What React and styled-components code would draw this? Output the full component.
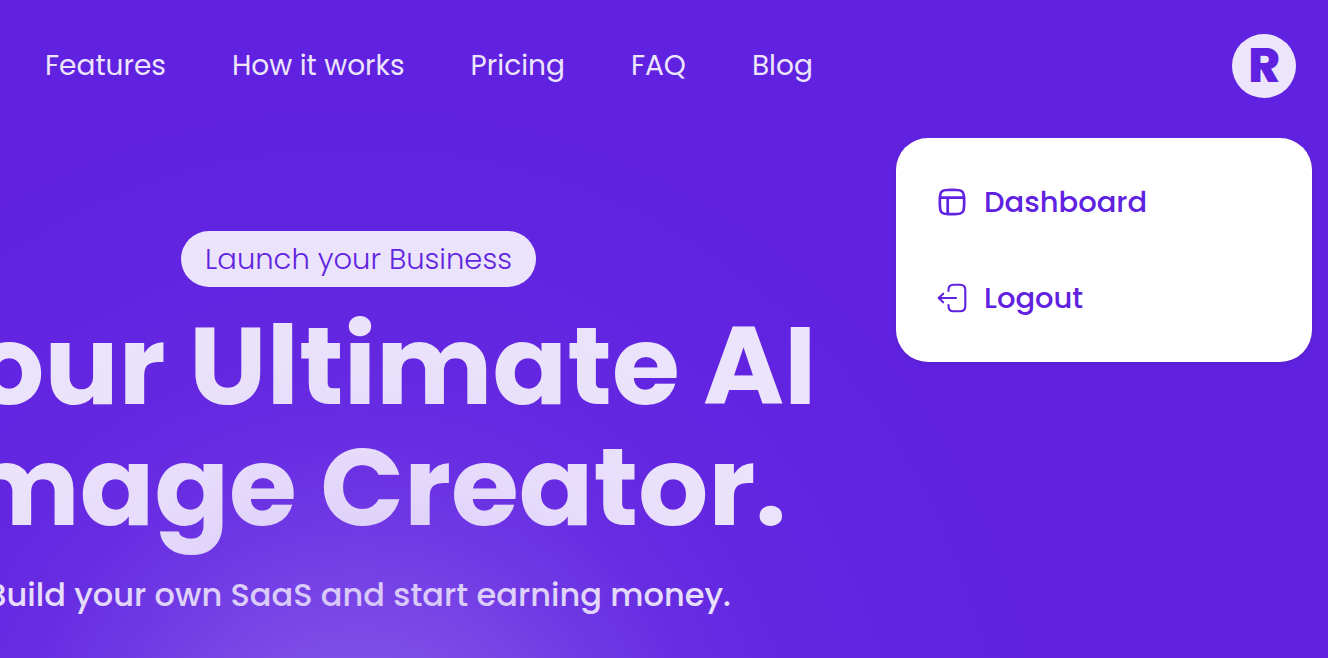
import React from "react";
import styled, { createGlobalStyle } from "styled-components";

const violet = "#6022e0";
const lilac = "#ede5fc";

const GlobalStyle = createGlobalStyle`
  *, *::before, *::after { box-sizing: border-box; }
  body {
    margin: 0;
    background: ${violet};
    color: ${lilac};
    font-family: Poppins, Inter, "Liberation Sans", sans-serif;
  }
  button { font: inherit; cursor: pointer; }
  a { color: inherit; text-decoration: none; }
`;

const Page = styled.div`
  position: relative;
  min-height: 100vh;
  overflow: hidden;
`;

const Header = styled.header`
  position: relative;
  z-index: 2;
  display: flex;
  align-items: center;
  justify-content: space-between;
  padding: 34px 32px 0 45px;
`;

const Nav = styled.nav`
  display: flex;
  gap: 66px;
  font-size: 28px;
  line-height: 40px;
`;

const NavLink = styled.a`
  white-space: nowrap;
`;

const Avatar = styled.button`
  display: flex;
  align-items: center;
  justify-content: center;
  width: 64px;
  height: 64px;
  padding: 0;
  border: 0;
  border-radius: 50%;
  background: ${lilac};
  color: ${violet};
  font-size: 48px;
  font-weight: 800;
  line-height: 64px;
`;

const Menu = styled.div`
  position: absolute;
  top: 138px;
  right: 16px;
  display: flex;
  flex-direction: column;
  width: 416px;
  padding: 16px;
  border-radius: 32px;
  background: #fff;
  box-shadow: 0 2px 4px rgba(0, 0, 0, 0.1);
`;

const MenuItem = styled.button`
  display: flex;
  align-items: center;
  gap: 16px;
  height: 96px;
  padding: 0 24px;
  border: 0;
  background: none;
  color: ${violet};
  font-size: 29px;
  font-weight: 500;
  line-height: 40px;
`;

const Icon = styled.svg`
  width: 32px;
  height: 32px;
  fill: none;
  stroke: currentColor;
  stroke-linecap: round;
  stroke-linejoin: round;
`;

const Hero = styled.main`
  display: flex;
  flex-direction: column;
  align-items: center;
  width: 54%;
  padding-top: 133px;
  white-space: nowrap;
`;

const Pill = styled.span`
  padding: 8px 24px;
  border-radius: 28px;
  background: ${lilac};
  color: ${violet};
  font-size: 29px;
  font-weight: 300;
  line-height: 40px;
`;

const Title = styled.h1`
  margin: 18px 0 0;
  font-size: 110px;
  font-weight: 700;
  line-height: 121px;
  text-align: center;
`;

const Subtitle = styled.p`
  margin: 24px 0 0;
  font-size: 32px;
  font-weight: 500;
  line-height: 48px;
`;

const Glow = styled.div`
  position: absolute;
  inset: 0;
  z-index: 1;
  pointer-events: none;
  background: radial-gradient(
    circle 700px at 27% 790px,
    rgba(172, 141, 244, 0.5) 0%,
    rgba(172, 141, 244, 0.4) 20%,
    rgba(172, 141, 244, 0.23) 36%,
    rgba(172, 141, 244, 0.1) 50%,
    rgba(172, 141, 244, 0.04) 65%,
    rgba(172, 141, 244, 0.01) 85%,
    rgba(172, 141, 244, 0) 100%
  );
`;

const links = ["Features", "How it works", "Pricing", "FAQ", "Blog"];

export default function App() {
  return (
    <Page>
      <GlobalStyle />
      <Header>
        <Nav aria-label="Main">
          {links.map((label) => (
            <NavLink href="#" key={label}>{label}</NavLink>
          ))}
        </Nav>
        <Avatar aria-label="Account menu" aria-expanded="true">R</Avatar>
        <Menu>
          <MenuItem>
            <Icon viewBox="0 0 32 32" strokeWidth="2.7" aria-hidden="true">
              <path d="M4 11C4 6 6 4 11 4Q16 3.600 21 4C26 4 28 6 28 11Q28.400 16 28 21C28 26 26 28 21 28Q16 28.400 11 28C6 28 4 26 4 21Q3.600 16 4 11Z" />
              <path d="M4 11.700H28M11.700 11.700V28" />
            </Icon>
            Dashboard
          </MenuItem>
          <MenuItem>
            <Icon viewBox="0 0 32 32" strokeWidth="2.1" aria-hidden="true">
              <path d="M12.500 9V8Q12.500 2.700 17.500 2.700H24Q29.300 2.700 29.300 8V24Q29.300 29.300 24 29.300H17.500Q12.500 29.300 12.500 24V23" />
              <path d="M20 16H3M7.200 11.700L2.700 16L7.200 20.300" />
            </Icon>
            Logout
          </MenuItem>
        </Menu>
      </Header>
      <Hero>
        <Pill>Launch your Business</Pill>
        <Title>Your Ultimate AI<br />Image Creator.</Title>
        <Subtitle>Build your own SaaS and start earning money.</Subtitle>
      </Hero>
      <Glow />
    </Page>
  );
}
